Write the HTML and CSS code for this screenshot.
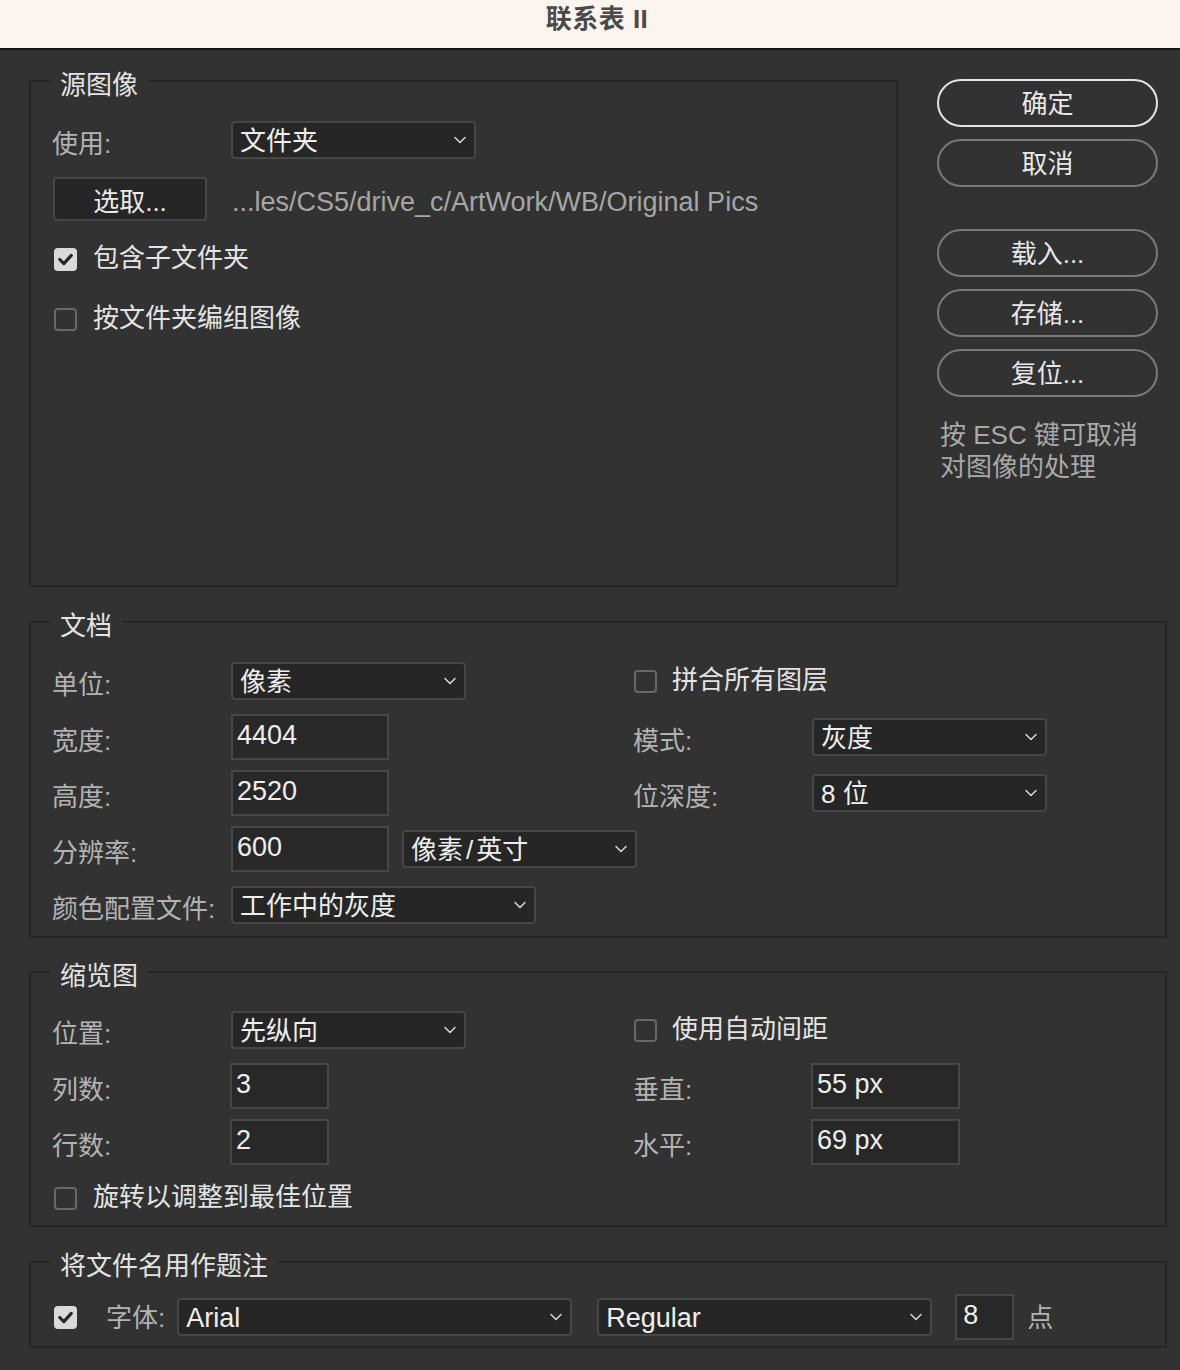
FILE: index.html
```html
<!DOCTYPE html>
<html lang="zh-CN">
<head>
<meta charset="utf-8">
<title>联系表 II</title>
<link rel="stylesheet" href="styles.css">
</head>
<body>
<header class="titlebar"><span class="title">联系表 II</span></header>
<main class="dialog">
  <div class="top">
    <fieldset class="group">
      <legend>源图像</legend>
      <div class="body body-source">
        <div class="row r-use">
          <span class="label">使用:</span>
          <div class="select w245"><span class="val">文件夹</span><svg class="chev" viewBox="0 0 12 8" width="12" height="8"><path d="M1 1.5 L6 6.5 L11 1.5"/></svg></div>
        </div>
        <div class="row r-choose">
          <button class="btn-rect">选取...</button>
          <span class="path">...les/CS5/drive_c/ArtWork/WB/Original Pics</span>
        </div>
        <div class="check-row cr1">
          <span class="cb checked"><svg viewBox="0 0 23 23" width="19" height="19"><path d="M4.5 11.5 L9.5 16.5 L18.5 6.5"/></svg></span>
          <span>包含子文件夹</span>
        </div>
        <div class="check-row cr2">
          <span class="cb"></span>
          <span>按文件夹编组图像</span>
        </div>
      </div>
    </fieldset>
    <aside class="actions">
      <button class="pill primary">确定</button>
      <button class="pill">取消</button>
      <button class="pill spaced">载入...</button>
      <button class="pill">存储...</button>
      <button class="pill">复位...</button>
      <p class="hint">按 ESC 键可取消<br>对图像的处理</p>
    </aside>
  </div>

  <fieldset class="group g-doc">
    <legend>文档</legend>
    <div class="body grid body-doc">
      <span class="label">单位:</span>
      <div class="cell"><div class="select w235"><span class="val">像素</span><svg class="chev" viewBox="0 0 12 8" width="12" height="8"><path d="M1 1.5 L6 6.5 L11 1.5"/></svg></div></div>
      <div class="check-row span2">
        <span class="cb rc"></span><span>拼合所有图层</span>
      </div>

      <span class="label">宽度:</span>
      <div class="cell"><input class="field w158" type="text" value="4404" readonly></div>
      <span class="label">模式:</span>
      <div class="cell"><div class="select w235"><span class="val">灰度</span><svg class="chev" viewBox="0 0 12 8" width="12" height="8"><path d="M1 1.5 L6 6.5 L11 1.5"/></svg></div></div>

      <span class="label">高度:</span>
      <div class="cell"><input class="field w158" type="text" value="2520" readonly></div>
      <span class="label">位深度:</span>
      <div class="cell"><div class="select w235"><span class="val">8 位</span><svg class="chev" viewBox="0 0 12 8" width="12" height="8"><path d="M1 1.5 L6 6.5 L11 1.5"/></svg></div></div>

      <span class="label">分辨率:</span>
      <div class="cell span3 res">
        <input class="field w158" type="text" value="600" readonly>
        <div class="select w235"><span class="val">像素<span class="slash">/</span>英寸</span><svg class="chev" viewBox="0 0 12 8" width="12" height="8"><path d="M1 1.5 L6 6.5 L11 1.5"/></svg></div>
      </div>

      <span class="label">颜色配置文件:</span>
      <div class="cell span3"><div class="select w305"><span class="val">工作中的灰度</span><svg class="chev" viewBox="0 0 12 8" width="12" height="8"><path d="M1 1.5 L6 6.5 L11 1.5"/></svg></div></div>
    </div>
  </fieldset>

  <fieldset class="group g-thumb">
    <legend>缩览图</legend>
    <div class="body grid body-thumb">
      <span class="label">位置:</span>
      <div class="cell"><div class="select w235"><span class="val">先纵向</span><svg class="chev" viewBox="0 0 12 8" width="12" height="8"><path d="M1 1.5 L6 6.5 L11 1.5"/></svg></div></div>
      <div class="check-row span2">
        <span class="cb rc"></span><span>使用自动间距</span>
      </div>

      <span class="label">列数:</span>
      <div class="cell"><input class="field w99 nudge" type="text" value="3" readonly></div>
      <span class="label">垂直:</span>
      <div class="cell"><input class="field w149 nudge" type="text" value="55 px" readonly></div>

      <span class="label">行数:</span>
      <div class="cell"><input class="field w99 nudge" type="text" value="2" readonly></div>
      <span class="label">水平:</span>
      <div class="cell"><input class="field w149 nudge" type="text" value="69 px" readonly></div>

      <div class="check-row span4">
        <span class="cb"></span><span>旋转以调整到最佳位置</span>
      </div>
    </div>
  </fieldset>

  <fieldset class="group g-caption">
    <legend>将文件名用作题注</legend>
    <div class="body body-caption">
      <span class="cb checked cap-cb"><svg viewBox="0 0 23 23" width="19" height="19"><path d="M4.5 11.5 L9.5 16.5 L18.5 6.5"/></svg></span>
      <span class="label cap-label">字体:</span>
      <div class="select w395 latin"><span class="val">Arial</span><svg class="chev" viewBox="0 0 12 8" width="12" height="8"><path d="M1 1.5 L6 6.5 L11 1.5"/></svg></div>
      <div class="select w335 latin gap25"><span class="val">Regular</span><svg class="chev" viewBox="0 0 12 8" width="12" height="8"><path d="M1 1.5 L6 6.5 L11 1.5"/></svg></div>
      <input class="field w59 gap23" type="text" value="8" readonly>
      <span class="label unit">点</span>
    </div>
  </fieldset>
</main>
</body>
</html>
```

FILE: styles.css
```css
html, body {
  margin: 0;
  padding: 0;
}

body {
  width: 1180px;
  min-height: 1370px;
  background: #323232;
  font-family: "Liberation Sans", "Noto Sans CJK SC", sans-serif;
  font-size: 26px;
  line-height: 1.2;
  color: #e6e6e6;
}

/* ---------- title bar ---------- */
.titlebar {
  height: 48px;
  background: #fbf4ef;
  border-bottom: 2px solid #141414;
  text-align: center;
}

.title {
  display: inline-block;
  margin-left: 14px;
  padding-top: 6px;
  font-size: 26px;
  line-height: 26px;
  font-weight: bold;
  color: #4a4a4a;
  letter-spacing: 0.5px;
}

/* ---------- dialog ---------- */
.dialog {
  padding: 14px 13px 0 29px;
}

.top {
  display: grid;
  grid-template-columns: 869px 220px;
  column-gap: 40px;
  align-items: start;
}

fieldset.group {
  margin: 0;
  padding: 0;
  min-width: 0;
  border: 2px solid #262626;
}

fieldset.group legend {
  margin-left: 19px;
  padding: 8px 10px 0;
  font-size: 26px;
  line-height: 26px;
  color: #e4e4e4;
}

fieldset.g-doc { margin-top: 18px; }
fieldset.g-thumb { margin-top: 17px; }
fieldset.g-caption { margin-top: 18px; }

.body {
  box-sizing: border-box;
}

.body-source {
  height: 487px;
  padding: 23px 21px 0;
}

.row {
  display: flex;
  align-items: center;
}

.r-use { height: 38px; }

.r-choose {
  height: 44px;
  margin-top: 18px;
}

.label {
  flex: none;
  width: 179px;
  padding-top: 9px;
  color: #b3b3b3;
  white-space: nowrap;
}

/* ---------- controls ---------- */
.select {
  box-sizing: border-box;
  height: 38px;
  display: flex;
  align-items: center;
  justify-content: space-between;
  padding: 0 8px 0 7px;
  background: #262626;
  border: 2px solid #464646;
  border-radius: 4px;
  color: #eeeeee;
  white-space: nowrap;
}

.select .val { padding-top: 3px; }

.select.latin { font-size: 27px; }

.slash { margin: 0 3px; }

.chev path {
  fill: none;
  stroke: #d2d2d2;
  stroke-width: 1.6;
  stroke-linecap: round;
  stroke-linejoin: round;
}

.w235 { width: 235px; }
.w245 { width: 245px; }
.w305 { width: 305px; }
.w395 { width: 395px; }
.w335 { width: 335px; }

.field {
  box-sizing: border-box;
  height: 46px;
  margin: 0;
  padding: 0 4px 4px;
  background: #282828;
  border: 2px solid #474747;
  border-radius: 0;
  font-family: "Liberation Sans", "Noto Sans CJK SC", sans-serif;
  font-size: 27px;
  color: #eeeeee;
  outline: none;
}

.w158 { width: 158px; }
.w99 { width: 99px; }
.w149 { width: 149px; }
.w59 { width: 59px; padding-left: 6px; }

.nudge { margin-left: -1px; }

.btn-rect {
  box-sizing: border-box;
  width: 154px;
  height: 44px;
  margin: 0 0 0 1px;
  padding: 0;
  background: #262626;
  border: 2px solid #474747;
  border-radius: 4px;
  font-family: inherit;
  font-size: 26px;
  color: #eaeaea;
}

.path {
  margin-left: 25px;
  padding-top: 6px;
  font-size: 27px;
  color: #a6a6a6;
  white-space: nowrap;
}

/* ---------- checkboxes ---------- */
.check-row {
  display: flex;
  align-items: center;
  height: 36px;
  color: #e4e4e4;
  white-space: nowrap;
}

.cr1 { margin-top: 20px; }
.cr2 { margin-top: 24px; }

.cb {
  flex: none;
  box-sizing: border-box;
  width: 23px;
  height: 23px;
  margin: 0 16px 0 2px;
  border: 2px solid #686868;
  border-radius: 4px;
  display: flex;
  align-items: center;
  justify-content: center;
}

.cb.rc { margin-left: 1px; margin-right: 15px; }

.cb.checked {
  background: #dadada;
  border-color: #dadada;
}

.cb svg path {
  fill: none;
  stroke: #262626;
  stroke-width: 3.8;
  stroke-linecap: round;
  stroke-linejoin: round;
}

/* ---------- actions column ---------- */
.actions {
  display: flex;
  flex-direction: column;
  gap: 12px;
  padding-top: 15px;
}

.pill {
  box-sizing: border-box;
  width: 221px;
  height: 48px;
  margin: 0;
  margin-left: -1px;
  padding: 0 0 4px;
  background: transparent;
  border: 2px solid #7a7a7a;
  border-radius: 24px;
  font-family: inherit;
  font-size: 26px;
  color: #e8e8e8;
}

.pill.primary { border-color: #e4e4e4; }
.pill.spaced { margin-top: 30px; }

.hint {
  margin: 10px 0 0 2px;
  font-size: 26px;
  line-height: 32px;
  color: #a9a9a9;
  white-space: nowrap;
}

/* ---------- grids ---------- */
.grid {
  display: grid;
  grid-template-columns: 179px 402px 179px 1fr;
  grid-auto-rows: 46px;
  row-gap: 10px;
  align-items: center;
}

.body-doc { padding: 19px 21px 8px; }
.body-thumb { padding: 18px 21px 4px; }

.grid .label { width: auto; }

.cell {
  display: flex;
  align-items: center;
}

.span2 { grid-column: 3 / 5; }
.span3 { grid-column: 2 / 5; }
.span4 { grid-column: 1 / 5; }

.res { gap: 13px; }

/* ---------- caption row ---------- */
.body-caption {
  display: flex;
  align-items: center;
  height: 46px;
  padding: 15px 21px 6px;
  box-sizing: content-box;
}

.cap-cb { margin-right: 29px; }

.cap-label {
  width: auto;
  padding-top: 3px;
  margin-right: 12px;
}

.gap25 { margin-left: 25px; }
.gap23 { margin-left: 23px; }

.unit {
  width: auto;
  margin-left: 13px;
  padding-top: 4px;
}
```
